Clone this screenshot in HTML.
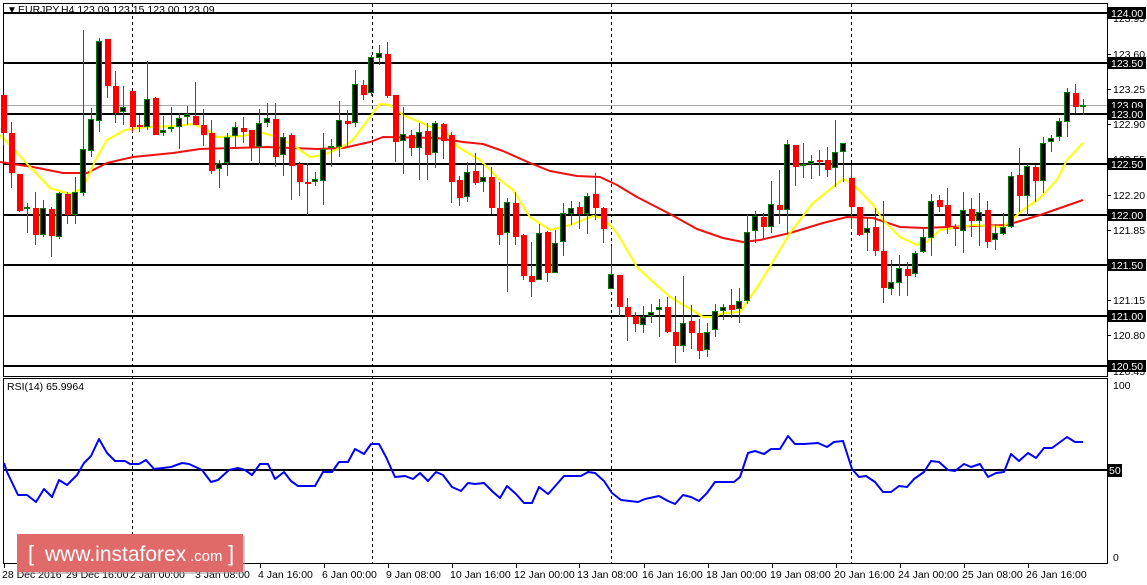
<!DOCTYPE html>
<html><head><meta charset="utf-8"><style>
html,body{margin:0;padding:0;background:#fff;width:1147px;height:585px;overflow:hidden;font-family:"Liberation Sans",sans-serif}
svg{position:absolute;left:0;top:0}
</style></head><body>
<svg id="s" width="1147" height="585" xmlns="http://www.w3.org/2000/svg" font-family="Liberation Sans, sans-serif" font-size="10.5">
<rect x="0" y="0" width="1147" height="585" fill="#fff"/>
<g id="g"></g>
</svg>
<script>
const NS="http://www.w3.org/2000/svg",g=document.getElementById('g');
function el(t,a,txt){const e=document.createElementNS(NS,t);for(const k in a)e.setAttribute(k,a[k]);if(txt!==undefined)e.textContent=txt;g.appendChild(e);return e;}
el('rect',{x:3.5,y:3.5,width:1104,height:373,fill:'none',stroke:'#000','shape-rendering':'crispEdges'});
el('rect',{x:3.5,y:378.5,width:1104,height:185,fill:'none',stroke:'#000','shape-rendering':'crispEdges'});
[132,372,611,851].forEach(x=>el('line',{x1:x+.5,y1:4,x2:x+.5,y2:563,stroke:'#000','stroke-dasharray':'3,3','shape-rendering':'crispEdges'}));
el('line',{x1:4,y1:105.5,x2:1107,y2:105.5,stroke:'#aaa','shape-rendering':'crispEdges'});
const P=p=>13+(124-p)*100.86;
[124,123.5,123,122.5,122,121.5,121,120.5].forEach(p=>el('rect',{x:4,y:Math.round(P(p))-1,width:1103,height:2,fill:'#000'}));
el('rect',{x:4,y:469,width:1103,height:2,fill:'#000'});
function pl(pts,c,w){el('polyline',{points:pts.map(p=>p.join(',')).join(' '),fill:'none',stroke:c,'stroke-width':w,'stroke-linejoin':'round'});}
pl([[0,162],[33,167],[63,173],[87,173],[107,163],[133,157],[173,153],[200,149],[267,147],[317,149],[343,148],[370,142],[383,137],[437,138],[463,142],[483,144],[503,151],[530,163],[550,171],[577,176],[600,177],[617,185],[637,197],[670,214],[697,229],[723,238],[743,242],[760,240],[790,233],[823,223],[847,217],[873,218],[900,227],[923,228],[973,226],[1007,225],[1040,215],[1083,200]],'#f01010',2);
pl([[0,135],[10,145],[30,167],[50,188],[70,194],[83,188],[97,157],[107,140],[125,130],[147,127],[173,126],[193,124],[207,130],[217,137],[240,136],[263,133],[277,137],[293,145],[310,157],[323,155],[340,148],[353,140],[370,117],[380,104],[390,105],[403,115],[420,122],[430,127],[443,128],[458,147],[480,160],[500,180],[513,190],[530,217],[550,230],[570,225],[593,216],[603,218],[617,233],[637,267],[653,282],[670,297],[687,307],[703,317],[713,317],[723,313],[740,312],[760,283],[790,233],[813,203],[843,179],[853,184],[873,205],[883,220],[900,237],[917,245],[927,242],[940,230],[973,225],[1003,227],[1023,210],[1040,198],[1057,180],[1067,160],[1083,143]],'#ffff00',2);
const C=[[3,95,133,95,145,0],[11,133,173,122,188,0],[19,174,211,174,212,0],[27,207,209,203,233,1],[35,208,235,192,245,0],[43,208,235,200,237,1],[51,209,236,207,257,0],[59,193,237,192,239,1],[67,194,215,192,224,0],[75,192,215,177,224,1],[83,149,193,30,196,1],[91,119,151,108,157,1],[99,41,121,38,132,1],[107,39,86,39,98,0],[115,86,113,71,123,0],[123,107,112,86,125,1],[132,91,127,91,132,0],[139,125,127,115,132,0],[147,99,127,61,130,1],[155,98,135,97,135,0],[163,130,133,116,136,1],[171,127,129,107,132,1],[179,118,127,113,149,1],[187,114,117,106,125,1],[195,116,125,82,125,0],[203,125,135,109,146,0],[211,133,171,120,174,0],[219,163,169,160,188,1],[227,137,163,133,176,1],[235,127,136,122,149,1],[243,128,132,117,143,0],[251,130,147,130,161,0],[259,123,147,109,165,1],[267,118,123,103,127,1],[275,119,157,103,167,0],[283,137,155,133,176,1],[291,135,166,133,200,0],[299,164,182,162,196,0],[307,182,184,163,215,0],[315,179,182,172,186,1],[323,149,181,133,205,1],[331,146,148,139,167,1],[339,120,147,101,157,1],[347,121,124,110,148,0],[355,84,123,70,127,1],[363,85,95,80,100,0],[371,57,93,55,96,1],[379,53,58,45,65,1],[387,54,96,42,98,0],[395,95,142,95,162,0],[403,134,141,107,174,1],[411,135,148,130,156,0],[419,132,148,123,180,1],[427,131,155,123,180,0],[435,123,153,121,168,1],[443,124,141,123,159,0],[451,135,182,132,203,0],[459,180,198,176,206,0],[467,172,197,162,202,1],[475,171,183,153,185,0],[483,177,182,164,192,1],[491,177,208,167,214,0],[499,208,235,182,245,0],[507,202,233,198,292,1],[515,203,237,192,245,0],[523,235,276,234,280,0],[531,276,282,242,297,0],[539,233,280,224,280,1],[547,232,273,231,282,0],[555,243,273,230,273,1],[563,213,242,203,256,1],[571,208,214,201,225,1],[579,207,214,202,229,0],[587,196,214,193,234,1],[595,194,208,173,220,0],[603,208,229,207,243,0],[611,274,289,246,289,1],[619,275,307,275,316,0],[627,307,317,298,341,0],[635,316,324,312,332,0],[643,317,325,306,333,1],[651,312,316,304,323,1],[659,307,310,299,337,1],[667,307,332,297,333,0],[675,332,346,296,363,0],[683,323,346,276,352,1],[691,321,333,305,349,0],[699,333,351,319,359,0],[707,332,350,323,357,1],[715,311,330,304,337,1],[723,307,311,304,320,1],[731,305,310,289,318,0],[739,301,309,288,323,1],[747,232,301,215,304,1],[755,216,231,211,243,1],[763,217,227,213,238,0],[771,204,227,181,233,1],[779,205,210,170,224,0],[787,144,210,140,233,1],[795,145,167,145,186,0],[803,164,166,143,178,1],[811,161,164,155,179,1],[819,160,162,150,176,0],[827,160,170,147,177,0],[835,152,168,120,187,1],[843,143,152,143,182,1],[851,178,207,165,229,0],[859,207,235,207,236,0],[867,228,233,217,251,1],[875,227,251,208,256,0],[883,251,288,201,303,0],[891,282,289,260,295,1],[899,268,283,255,296,1],[907,269,276,262,296,0],[915,253,274,251,277,1],[923,237,252,228,253,1],[931,201,238,194,256,1],[939,200,207,195,212,0],[947,205,227,188,234,0],[955,227,229,224,246,0],[963,210,231,192,253,1],[971,209,221,198,237,0],[979,212,221,193,246,1],[987,210,242,201,248,0],[995,233,240,224,250,1],[1003,227,234,213,235,1],[1011,176,227,172,228,1],[1019,175,196,148,212,0],[1027,166,196,164,216,1],[1035,167,181,165,202,0],[1043,143,181,137,193,1],[1051,138,142,135,152,1],[1059,121,137,118,141,1],[1067,92,122,88,137,1],[1075,93,107,84,113,0],[1083,105,105,99,115,1]];
C.forEach(([x,o,c,h,l,b])=>{const t=Math.min(o,c),bt=Math.max(o,c);const col=b?'#008000':'#ff0000';
el('rect',{x:x,y:h,width:1,height:Math.max(1,l-h),fill:col});
if(b){el('rect',{x:x-2.5,y:t+.5,width:5,height:Math.max(1,bt-t-1),fill:'#000',stroke:col,'stroke-width':1});}
else el('rect',{x:x-2,y:t,width:6,height:Math.max(2,bt-t),fill:col});});
pl([[4,463],[7,472],[18,495],[27,495],[36,502],[44,489],[52,497],[59,480],[67,485],[77,475],[84,463],[91,456],[99,439],[107,453],[115,461],[125,461],[130,464],[139,464],[146,460],[154,469],[171,467],[182,463],[189,464],[202,470],[211,482],[218,480],[229,470],[238,468],[245,470],[252,475],[260,464],[268,464],[275,479],[284,472],[291,481],[298,486],[315,486],[323,472],[332,472],[339,462],[348,462],[355,449],[364,454],[371,444],[379,444],[386,457],[395,477],[405,476],[413,479],[420,473],[428,481],[436,472],[443,475],[452,487],[461,491],[468,483],[475,484],[484,483],[493,492],[500,498],[507,486],[516,494],[524,503],[532,503],[539,487],[548,494],[550,492],[564,476],[581,476],[588,472],[595,473],[604,481],[612,493],[621,500],[638,502],[645,499],[659,496],[668,501],[675,504],[683,495],[691,497],[699,501],[707,493],[715,482],[734,482],[740,477],[748,453],[755,451],[764,454],[771,449],[780,449],[788,436],[795,444],[804,444],[818,443],[827,447],[834,442],[843,441],[852,469],[859,477],[866,476],[875,482],[883,492],[891,492],[899,486],[907,487],[914,479],[924,472],[931,461],[939,462],[948,470],[955,471],[964,464],[971,467],[980,464],[988,477],[996,473],[1004,472],[1011,454],[1019,461],[1028,453],[1036,458],[1044,448],[1052,448],[1067,437],[1075,442],[1083,442]],'#0000ff',2);
[['123.95',18],['123.60',54],['123.25',89],['122.90',124],['122.55',159],['122.20',195],['121.85',230],['121.15',300],['120.80',335],['120.45',371]].forEach(([t,y])=>{el('rect',{x:1107,y:y,width:4,height:1,fill:'#000'});el('text',{x:1113,y:y+4},t);});
[['124.00',13],['123.50',63],['123.09',105],['123.00',114],['122.50',164],['122.00',215],['121.50',265],['121.00',316],['120.50',366]].forEach(([t,y])=>{el('rect',{x:1108,y:y-6,width:38,height:12,fill:'#000'});el('text',{x:1111,y:y+4,fill:'#fff'},t);});
el('text',{x:1113,y:389},'100');
el('rect',{x:1108,y:464,width:14,height:13,fill:'#000'});el('text',{x:1109,y:474,fill:'#fff'},'50');
el('text',{x:1113,y:561},'0');
el('text',{x:7,y:13,'font-size':'10'},'▼');
el('text',{x:18,y:13},'EURJPY,H4  123.09 123.15 123.00 123.09');
el('text',{x:7,y:390},'RSI(14) 65.9964');
[['28 Dec 2016',2],['29 Dec 16:00',66],['2 Jan 00:00',130],['3 Jan 08:00',195],['4 Jan 16:00',258],['6 Jan 00:00',322],['9 Jan 08:00',386],['10 Jan 16:00',450],['12 Jan 00:00',514],['13 Jan 08:00',577],['16 Jan 16:00',642],['18 Jan 00:00',706],['19 Jan 08:00',770],['20 Jan 16:00',834],['24 Jan 00:00',898],['25 Jan 08:00',962],['26 Jan 16:00',1026]].forEach(([t,x])=>{el('rect',{x:x+2,y:564,width:1,height:4,fill:'#000'});el('text',{x:x,y:578},t);});
el('rect',{x:19,y:536,width:226,height:38,fill:'#999','fill-opacity':'0.5'});
el('rect',{x:17,y:534,width:226,height:38,fill:'#e06a6a'});
el('text',{x:28,y:561,fill:'#fff','font-size':'22'},'[');
el('text',{x:45,y:561,fill:'#fff','font-size':'21'},'www.instaforex');
el('text',{x:190,y:561,fill:'#fff','font-size':'15'},'.com');
el('text',{x:228,y:561,fill:'#fff','font-size':'22'},']');
</script>
</body></html>
